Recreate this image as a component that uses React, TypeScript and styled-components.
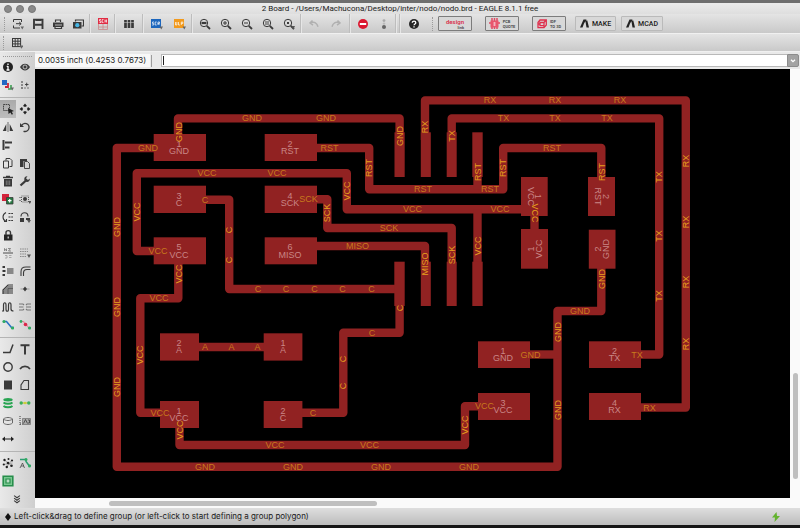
import React from "react";
import styled, { createGlobalStyle } from "styled-components";

const GlobalStyle = createGlobalStyle`
  * { box-sizing: border-box; }
  body { margin: 0; background: #1c1c1c; font-family: Inter, "Liberation Sans", sans-serif; color: #1a1a1a; }
  button, input { font: inherit; color: inherit; }
`;

const ink = "#3a3a3a";

const Desktop = styled.div`
  display: flex;
  flex-direction: column;
  height: 100vh;
  padding: 3px 0;
  background: linear-gradient(#6e6e6e 0 3px, #161616 4px);
`;

const Window = styled.main`
  flex: 1;
  min-height: 0;
  display: flex;
  flex-direction: column;
  background: #e4e4e4;
`;

const TitleBar = styled.header`
  display: grid;
  grid-template-columns: 1fr auto 1fr;
  align-items: center;
  height: 11px;
  padding: 0 4px;
  background: linear-gradient(#ebebeb, #dedede);
`;

const Lights = styled.div`
  display: flex;
  gap: 4px;
`;

const Light = styled.button`
  width: 8px;
  height: 8px;
  padding: 0;
  border: 1px solid #777;
  border-radius: 50%;
  background: #8a8a8a;
`;

const Title = styled.h1`
  margin: 0;
  font-family: Roboto, "Liberation Sans", sans-serif;
  font-size: 8px;
  line-height: 11px;
  font-weight: 400;
  white-space: nowrap;
`;

const Toolbar = styled.div<{ $height: number }>`
  display: flex;
  align-items: center;
  height: ${(p) => p.$height}px;
  background: linear-gradient(#e4e4e4, #c9c9c9);
  border-bottom: 1px solid #f0f0f0;
`;

const Grip = styled.span<{ $width: number }>`
  display: flex;
  justify-content: center;
  width: ${(p) => p.$width}px;
  height: 14px;
  &::before {
    content: "";
    border-left: 1px dotted #9b9b9b;
  }
`;

const ToolButton = styled.button<{ $width: number; $selected?: boolean }>`
  flex: none;
  display: flex;
  align-items: center;
  justify-content: center;
  width: ${(p) => p.$width}px;
  height: 18px;
  padding: 0;
  border: 0;
  background: ${(p) => (p.$selected ? "linear-gradient(#a9a9a9, #bdbdbd)" : "none")};
`;

const Divider = styled.span`
  width: 4px;
  height: 100%;
  background: linear-gradient(90deg, transparent 1px, #bdbdbd 1px 2px, #e6e6e6 2px 3px, transparent 3px);
`;

const LinkButton = styled.button<{ $width: number; $gap: number; $strong?: boolean }>`
  flex: none;
  display: flex;
  align-items: center;
  justify-content: center;
  gap: 3px;
  width: ${(p) => p.$width}px;
  height: 15px;
  margin-right: ${(p) => p.$gap}px;
  padding: 0;
  border: 1px solid ${(p) => (p.$strong ? "#7c7c7c" : "#bababa")};
  border-radius: 1px;
  background: #d8d8d8;
  font-family: Roboto, "Liberation Sans", sans-serif;
  font-size: 7px;
  line-height: 8px;
  font-weight: 500;
`;

const Tiny = styled.span<{ $red?: boolean }>`
  font-size: ${(p) => (p.$red ? 6 : 4)}px;
  line-height: ${(p) => (p.$red ? 7 : 5)}px;
  text-align: left;
  color: ${(p) => (p.$red ? "#d8304c" : "#444")};
  font-weight: 600;
`;

const DesignMark = styled.span`
  display: grid;
  ${Tiny}:last-child { justify-self: end; }
`;

const Body = styled.div`
  flex: 1;
  min-height: 0;
  display: flex;
`;

const Palette = styled.aside`
  flex: none;
  width: 35px;
  background: linear-gradient(90deg, #e9e9e9, #cfcfcf);
`;

const PaletteGrip = styled.div`
  height: 6px;
  padding: 4px 3px 0;
  &::before {
    content: "";
    display: block;
    border-top: 1px dotted #9a9a9a;
  }
`;

const PaletteGrid = styled.div`
  display: grid;
  grid-template-columns: 17px 17px;
`;

const PaletteRule = styled.hr`
  height: 1px;
  margin: 3px 0 2px;
  border: 0;
  background: #b4b4b4;
`;

const MoreButton = styled(ToolButton)`
  height: 18px;
`;

const Workspace = styled.section`
  flex: 1;
  min-width: 0;
  display: flex;
  flex-direction: column;
`;

const CommandRow = styled.div`
  display: flex;
  align-items: center;
  height: 17px;
  background: #e9e9e9;
`;

const Coordinates = styled.output`
  width: 115px;
  height: 13px;
  padding-left: 3px;
  background: #f8f8f8;
  font-size: 8px;
  line-height: 13px;
  white-space: nowrap;
`;

const CommandBox = styled.div`
  flex: 1;
  display: flex;
  align-items: center;
  height: 13px;
  margin-left: 10px;
  padding-left: 1px;
  border: 1px solid #b9b9b9;
  border-right: 0;
  background: #fff;
`;

const SmallWell = styled.span`
  width: 8px;
  height: 12px;
  margin-left: 1px;
  margin-right: -8px;
  border-left: 1px solid #9d9d9d;
`;

const Caret = styled.span`
  width: 1px;
  height: 9px;
  background: #222;
`;

const CommandInput = styled.input`
  flex: 1;
  min-width: 0;
  height: 11px;
  padding: 0;
  border: 0;
  outline: 0;
  background: none;
  font-size: 8px;
`;

const HistoryButton = styled.button`
  display: flex;
  align-items: center;
  justify-content: center;
  width: 12px;
  height: 13px;
  margin-right: 1px;
  padding: 0;
  border: 1px solid #8c8c8c;
  border-radius: 0 2px 2px 0;
  background: #a3a3a3;
`;

const CanvasGrid = styled.div`
  flex: 1;
  min-height: 0;
  display: grid;
  grid-template-columns: 1fr 10px;
  grid-template-rows: minmax(0, 1fr) 10px;
  background: #fafafa;
`;

const Canvas = styled.div`
  min-width: 0;
  min-height: 0;
  background: #000;
  svg {
    display: block;
    width: 100%;
    height: 100%;
  }
`;

const VerticalTrack = styled.div`
  display: grid;
  grid-template-rows: 304fr 106fr 19fr;
  justify-items: center;
`;

const HorizontalTrack = styled.div`
  display: grid;
  grid-template-columns: 74fr 268fr 413fr;
  align-items: center;
`;

const Thumb = styled.span<{ $vertical?: boolean }>`
  ${(p) => (p.$vertical ? "grid-row: 2; width: 5px;" : "grid-column: 2; height: 5px;")}
  border-radius: 3px;
  background: #bfbfbf;
`;

const StatusBar = styled.footer`
  display: flex;
  align-items: center;
  gap: 3px;
  height: 17px;
  padding: 0 20px 0 5px;
  background: linear-gradient(#dedede, #bcbcbc);
  font-size: 8px;
  line-height: 17px;
  white-space: nowrap;
`;

const StatusText = styled.span`
  flex: 1;
`;

const Svg = ({ children, size = 12 }: { children: React.ReactNode; size?: number }) => (
  <svg width={size} height={size} viewBox="0 0 12 12" fill="none" stroke={ink} strokeWidth="1.2" aria-hidden="true">
    {children}
  </svg>
);

const arrow = <path d="M8.5 8.5h3.5l-1.7 3z" fill="#666" stroke="none" />;
const lens = (inner: React.ReactNode) => (
  <>
    <circle cx="5" cy="5" r="3.7" strokeWidth="1" />
    <path d="M7.8 7.8 11 11" strokeWidth="1.8" />
    {inner}
  </>
);

const icons: Record<string, React.ReactNode> = {
  Open: <><path d="M1.5 4V1.5h8V4M1.5 7.500V10h6.500M4 5.700h5M7.200 4l2 1.700-2 1.700" strokeWidth="1" />{arrow}</>,
  Save: <path d="M2 11V1.800h8.500V11M3 6.700h7M4 2h5" strokeWidth="1.900" />,
  Print: <><path d="M1 4.500h10.500V9H1z" fill={ink} stroke="none" /><path d="M3.500 4V2h5v2M3 8.500v2h6.500v-2" /><path d="M3 7h7" stroke="#ddd" strokeWidth=".8" /></>,
  "CAM processor": <><path d="M3.500 3.500V2h8v6h-2" /><path d="M1 4h8.500v6.500H1z" fill={ink} stroke="none" /><circle cx="5.300" cy="7.200" r="2.100" fill="#45b5e4" stroke="none" /></>,
  "Switch to schematic": <><path d="M1 0h10v6H1z" fill="#e02c43" stroke="none" /><path d="M1.500 6v5.500h9V6M6 6v5.500M1.500 9h9" stroke="#c88" strokeWidth=".8" /><path d="M2.500 4.500h1.500V3H2.500V1.500H4M6.500 1.500H5.200v3h1.300M8 1.500v3M9.500 1.500v3M8 3h1.500" stroke="#fff" strokeWidth=".7" /></>,
  "Use library": <path d="M2.500 2v8M6 2v8M9.500 2v8" strokeWidth="2.700" strokeDasharray="2 .6 6" />,
  "Run script": <><path d="M0 1h10v9H0z" fill="#1c66bd" stroke="none" /><path d="M3 4H1.500v1.500h1.200V7H1M5.700 4H4.200v3h1.500M7 7V4h1.500v1.500H7L8.500 7" stroke="#fff" strokeWidth=".7" />{arrow}</>,
  "Run ULP": <><path d="M0 1h10v9H0z" fill="#f29a1d" stroke="none" /><path d="M1.500 4v3h1.400V4M4.500 4v3H6M7.300 7V4h1.500v1.500H7.300" stroke="#fff" strokeWidth=".7" />{arrow}</>,
  "Zoom to fit": lens(<path d="M2.500 5h5" strokeWidth="2.200" />),
  "Zoom in": lens(<path d="M3 5h4M5 3v4" strokeWidth="1" />),
  "Zoom out": lens(<path d="M3 5h4" strokeWidth="1" />),
  Redraw: lens(<path d="M3 4h4M3 6h4" strokeWidth=".9" />),
  "Zoom select": <>{lens(<path d="M4 4h2v2H4z" fill={ink} stroke="none" />)}<path d="M8.500 8h3.500l-1.700 3.500z" fill="#555" stroke="none" /></>,
  Undo: <path d="M4.500 2.500 2 5l3 2.200M2.500 4.800c4-1.300 6.500 0 7.500 4" stroke="#b0b0b0" strokeWidth="1.500" />,
  Redo: <path d="M7.500 2.500 10 5 7 7.200M9.500 4.800C5.500 3.500 3 4.800 2 8.800" stroke="#b0b0b0" strokeWidth="1.500" />,
  Stop: <><circle cx="6" cy="6" r="5" fill="#db1830" stroke="none" /><path d="M2.800 6h6.400" stroke="#fff" strokeWidth="2" /></>,
  Go: <><circle cx="6" cy="2.600" r="1.400" fill="#aaa" stroke="none" /><circle cx="6" cy="5.600" r="1.200" fill="#bbb" stroke="none" /><circle cx="6" cy="9" r="2" fill="#666" stroke="none" /></>,
  Help: <><circle cx="6" cy="6" r="5" fill="#262626" stroke="none" /><path d="M4.300 4.800c0-2.200 3.500-2.200 3.500 0C7.800 6 6 6 6 7.300M6 8.300v1.200" stroke="#fff" strokeWidth="1.300" /></>,
  Grid: <><path d="M1 1.500h9M1 4.200h9M1 6.900h9M1 9.600h9M1.500 1v9M4.200 1v9M6.900 1v9M9.600 1v9" strokeWidth="1" /><path d="M8.500 8.500h4l-2 3.300z" fill="#666" stroke="none" /></>,
  Info: <><circle cx="6" cy="6" r="5" fill="#222" stroke="none" /><path d="M6 2.500v1.500M6 5v4M4.700 5.300H6M4.500 9h3" stroke="#fff" strokeWidth="1.300" /></>,
  Show: <><path d="M1 6c2.500-4.500 7.500-4.500 10 0-2.500 4.500-7.500 4.500-10 0z" fill={ink} stroke="none" /><circle cx="6" cy="6" r="2" stroke="#ddd" strokeWidth=".8" /></>,
  Display: <><path d="M0 1h5v5H0z" fill="#2469c4" stroke="none" /><path d="M6 4v4H3" stroke="#c9283c" strokeWidth="1.800" /><path d="M9 6v4H6" stroke="#3da052" strokeWidth="1.600" />{arrow}</>,
  Mark: <><path d="M3 2v8.500" strokeDasharray="2 1" strokeWidth="1" /><path d="M2 9h8" strokeDasharray="2 1" strokeWidth="1" stroke="#777" /><path d="M6 5.500h3.500M7.700 3.700v3.600" strokeWidth=".9" /></>,
  Group: <><path d="M1.500 1.500h6v6h-6z" strokeWidth=".9" strokeDasharray="1.500 .6" /><path d="m6 5 6 3-2.300.7L11 11l-1.200.7-1.400-2.300L6.500 11z" fill="#222" stroke="none" /></>,
  Move: <path d="m6 .5 2 2.500L6 4 4 3zM6 11.500 4 9l2-1 2 1zM.5 6 3 4l1 2-1 2zM11.500 6 9 8 8 6l1-2z" fill="#222" stroke="none" />,
  Mirror: <><path d="M4.300 3v7H.8zM7.700 3v7h3.500z" fill={ink} stroke="none" /><path d="M6 1v10" strokeWidth=".7" /></>,
  Rotate: <><path d="M2.500 4.500C5 .5 10.500 2.500 10 7c-.4 3-3 4-5.500 3.300" strokeWidth="1.300" /><path d="M1 2v4h4z" fill={ink} stroke="none" /></>,
  Align: <path d="M1.500 1v10M3 3.500h7M3 8.500h4.500" strokeWidth="2" />,
  Copy: <path d="M1.500 4h5v7h-5zM4 3.500V1.500h4l2 2v6H7.500" strokeWidth="1" />,
  Paste: <><path d="M1 2h7v2H4.500v6H1z" fill={ink} stroke="none" /><path d="M5.500 4.500h3l2 2v5h-5z" strokeWidth=".9" /></>,
  Delete: <><path d="M1 2.500h10M4 1.500h4" strokeWidth="1.500" /><path d="M2 4h8v7.500H2z" fill={ink} stroke="none" /><path d="M4.300 5.500v4.500M6 5.500v4.500M7.700 5.500v4.500" stroke="#aaa" strokeWidth=".6" /></>,
  Change: <><path d="m1.500 10.500 5.500-5" strokeWidth="2.300" /><path d="M10.800 3.500 9 5 7 3.200 8.500 1.200C5.500.7 4.500 4 6 6c2 2 5.300.5 4.800-2.500z" fill={ink} stroke="none" /></>,
  "Add part": <><path d="M0 1h7v7H0z" fill="#d3233a" stroke="none" /><path d="M4.500 4.500h6.500V11H4.500z" fill="#277a42" stroke={ink} strokeWidth=".8" /><path d="M7.700 6v3.500M6 7.700h3.500" stroke="#fff" /></>,
  Replace: <><path d="M2.500 3h7v6h-7z" strokeDasharray="1 1" strokeWidth=".8" /><circle cx="6" cy="6" r="2" fill={ink} stroke="none" /><path d="M0 4.500h2M0 7.500h2" stroke="#777" strokeWidth=".8" /><path d="M9 8h3.500l-1.700 3z" fill="#555" stroke="none" /></>,
  Pinswap: <><path d="M4 1.500C0 3.500 0 8.500 4 10.500M2 10.500h2.500V8" strokeWidth="1.100" /><path d="M6.500 2.500H11M6.500 6H11M6.500 9.500H11" strokeDasharray="2 .7" /></>,
  "Replace package": <><path d="M1 7h4v4H1zM7 7h4v2H7z" fill={ink} stroke="none" /><path d="M2 5.500c0-5 7-5 7 0" /><path d="M8 9h4l-2 3z" fill="#555" stroke="none" /></>,
  Lock: <><path d="M2 5.500h8.500v6H2z" fill="#262626" stroke="none" /><path d="M4 6V3.500c0-2.500 4.500-2.500 4.500 0V6" strokeWidth="1.400" /><path d="M6.200 7.500v2" stroke="#ddd" /></>,
  Name: <><path d="M2.500 4V1.500L4.500 4V1.500M6 1.500h2.500L6.500 4h2.500" strokeWidth=".7" stroke="#666" /><path d="M1 6h10" strokeWidth=".9" /><path d="M3 8.500h2v2.500H3M7 8.500h2.500M7 10.500h2.500" strokeWidth=".8" stroke="#999" /></>,
  Value: <><path d="M1 2h8M1 4.500h8M1 7h6M1 9.500h6" strokeWidth="1.200" strokeDasharray="1.500 .8" stroke="#888" /><path d="M8 7.500h4l-2 3.500z" fill="#555" stroke="none" /></>,
  Smash: <><path d="M5 3h6.500v6H5z" fill="#888" stroke="none" /><path d="M.5 2h2.500M.5 6h3M.5 10h2.500" strokeWidth="1.800" /></>,
  Miter: <path d="M2 11V7C2 3.500 3.500 2 7 2h4.500M4.500 11V8c0-2.500 1-3.500 3.500-3.500h3.500" strokeWidth="1.100" />,
  Split: <><path d="M1 11V8l5-5h5v8z" fill="#888" stroke="none" /><path d="M1 11V7l5-5h5" strokeWidth="1.200" /><path d="M6 11V5.500h5" stroke="#555" strokeWidth=".8" /></>,
  Optimize: <><path d="M1.500 6h9" stroke="#aaa" strokeWidth="1.300" /><path d="M6 3.500 8 6 6 8.500 4 6z" fill={ink} stroke="none" /></>,
  Meander: <path d="M0 10h1.500V4c0-3 2.500-3 2.500 0v4c0 3 2.500 3 2.500 0V4C6.500 1 9 1 9 4v4c0 2 1 2 2.500 2" strokeWidth="1.200" />,
  Ripup: <path d="M0 3h4l1 1M7 4l1-1h4M0 6h4.500M7 6H12M0 9h4l1-1M7 8l1 1h4" strokeWidth="1.100" stroke="#777" />,
  Route: <><path d="M1 2.500h3.500l5 6H12" stroke="#2a72c4" strokeWidth="1.600" /><circle cx="2" cy="2.500" r="1.600" fill="#2fab62" stroke="none" /><circle cx="10.500" cy="9" r="1.600" fill="#2fab62" stroke="none" /></>,
  Unroute: <><path d="M1 2.500h3.500l5 6H12" stroke="#e08c9c" strokeWidth="1.200" /><circle cx="2" cy="2.500" r="1.400" fill="#2fab62" stroke="none" /><circle cx="6.500" cy="5.500" r="1.800" fill="#db2548" stroke="none" /><circle cx="10.500" cy="9" r="1.600" fill="#2fab62" stroke="none" /></>,
  Line: <path d="M1 9.500h7l3-8" strokeWidth="1.500" />,
  Text: <path d="M1.500 2.200h9M6 2v9.500" strokeWidth="2" />,
  Circle: <circle cx="6" cy="6" r="4.200" strokeWidth="1.400" />,
  Arc: <path d="M1 8c2.500-3.500 7.500-3.500 10 0" strokeWidth="1.700" />,
  Rectangle: <path d="M2 1.500h8v9H2z" fill={ink} stroke="none" />,
  Polygon: <path d="M2 10.500V6l3-4.500h4.500v9z" strokeWidth="1.100" />,
  Via: <><ellipse cx="6" cy="2.700" rx="4.700" ry="1.700" fill="#28a452" stroke="none" /><path d="M1.500 5.500c2 1.700 7 1.700 9 0M1.500 9c2 1.700 7 1.700 9 0" stroke="#28a452" strokeWidth="1.900" /></>,
  Signal: <><path d="M2 6h8" stroke="#c9c642" strokeWidth="1.200" /><circle cx="2.200" cy="6" r="1.700" fill="#3aaf5b" stroke="none" /><circle cx="6" cy="6" r="1.300" fill="#cbcf3a" stroke="none" /><circle cx="9.800" cy="6" r="1.700" fill="#3aaf5b" stroke="none" /></>,
  Hole: <path d="M1.500 4c2-2 7-2 9 0-2 2-7 2-9 0zv4c2 2 7 2 9 0V4" strokeWidth="1" stroke="#666" />,
  Attribute: <><path d="M1 1v10M1 9h3" strokeDasharray="1 1" strokeWidth="1" /><path d="M3.500 3.500h8v6h-8z" fill="#aaa" stroke="#777" strokeWidth=".8" /><path d="m4.500 8.500 2-4 2 4M9 5h1.500v3H9" strokeWidth=".8" /></>,
  Dimension: <path d="M0 6 3 3.500v2h6v-2L12 6 9 8.500v-2H3v2z" fill="#222" stroke="none" />,
  Ratsnest: <><path d="m2.500 3 7 6M9.500 3.500 5 9.500M1.500 7.500 10.500 6" strokeWidth=".6" stroke="#777" /><g fill="#222" stroke="none"><circle cx="2.500" cy="3" r="1.200" /><circle cx="6.500" cy="2" r="1" /><circle cx="10" cy="3.500" r="1.100" /><circle cx="6" cy="6" r="1.300" /><circle cx="1.800" cy="7.500" r="1.100" /><circle cx="4.800" cy="10" r="1.200" /><circle cx="9.500" cy="8.800" r="1.300" /></g></>,
  Autorouter: <><path d="M1 2.500h6v2l3 4h2" stroke="#2c9c71" strokeWidth="1.500" /><path d="M2 9h3M1 11l2.500-5 2 5" strokeWidth=".7" /><circle cx="7" cy="2.500" r="1.500" fill="#2fab62" stroke="none" /><circle cx="10.500" cy="9" r="1.500" fill="#2fab62" stroke="none" /></>,
  DRC: <><path d="M1.200 1.200h9.600v9.600H1.200z" fill="#79c891" stroke="#278e4b" strokeWidth="1.600" /><path d="M4 4h4v4H4z" fill="#b8dec3" stroke="#278e4b" /></>,
  More: <path d="m2.500 2 3.500 2.500L9.500 2M2.500 5 6 7.500 9.500 5M2.500 8 6 10.500 9.500 8" strokeWidth="1.300" />,
};

const Tool = ({ name, width = 21, selected }: { name: string; width?: number; selected?: boolean }) => (
  <ToolButton type="button" aria-label={name} $width={width} $selected={selected}>
    <Svg>{icons[name]}</Svg>
  </ToolButton>
);

const paletteGroups: string[][] = [
  ["Info", "Show", "Display", "Mark"],
  ["Group", "Move", "Mirror", "Rotate", "Align", "", "Copy", "Paste", "Delete", "Change", "Add part", "Replace",
    "Pinswap", "Replace package", "Lock", "", "Name", "Value", "Smash", "Miter", "Split", "Optimize", "Meander", "Ripup", "Route", "Unroute"],
  ["Line", "Text", "Circle", "Arc", "Rectangle", "Polygon", "Via", "Signal", "Hole", "Attribute", "Dimension", ""],
  ["Ratsnest", "Autorouter", "DRC", ""],
];

const Autodesk = () => (
  <svg width="9" height="9" viewBox="0 0 9 9" aria-hidden="true">
    <path d="M0 8.500 3.500.5h3L4 4.500 2.500 8.500zM5.300 1.500l2 0L9 8.500H6.500z" fill="#222" />
  </svg>
);

const traces = [
  "M178 147V118.400H399.600V140",
  "M425 140V100.400H685.800V407.500H641",
  "M451.700 140V118.400H659.200V354.500H641",
  "M317 148H369.200V189.200H503.200V148H601.300V180",
  "M477.500 170V189.200",
  "M154 251H136.800V173.200H346.800V209.200H521",
  "M477.500 209.200V270",
  "M534.500 214V232",
  "M601.300 266V311H557.500V466.800H116.800V148H154",
  "M530 354.500H557.500",
  "M206 199.800H229.200V289H399.600",
  "M399.600 300V332.800H343.300V412.700H302",
  "M317 199.200H327.300V228H451.700V270",
  "M317 246H425V270",
  "M178.300 264V298.200H140.300V412.700H160",
  "M179.500 426V445H465V406.200H478",
  "M199 347H264",
];

const pads: [number, number, number, number][] = [
  [153.700, 134, 52.300, 27], [153.700, 185.700, 52.300, 27.300], [153.700, 237.300, 52.300, 27],
  [264.700, 134, 52.300, 27], [264.700, 185.700, 52.300, 27.300], [264.700, 237.300, 52.300, 27],
  [160, 333.300, 39, 27.300], [263.700, 333.300, 38.700, 27.300], [160, 401, 39, 27], [263.700, 401, 38.700, 27],
  [478, 341.300, 52, 26.700], [478, 393, 52, 27], [589, 341.300, 52, 26.700], [589, 393, 52, 27],
  [521, 177, 26.700, 39], [521, 229, 27, 39.700], [588, 177, 27, 39], [588.800, 229.700, 26.700, 39],
  [394.500, 132.300, 10.200, 44.700], [420.800, 132.300, 10, 44.700], [446.700, 132.300, 10, 44.700], [472.300, 132.300, 10.400, 44.700],
  [394.300, 261.700, 10.400, 44.300], [420.800, 261.700, 10, 44.300], [446.700, 261.700, 10, 44.300], [472.300, 261.700, 10.400, 44.300],
];

type Label = [string, number, number, number?];

const netLabels: Label[] = [
  ["GND", 252, 118], ["GND", 326, 118], ["GND", 178.500, 132, -90], ["GND", 148, 148],
  ["GND", 400, 136, -90], ["GND", 117, 227, -90], ["GND", 117, 307, -90], ["GND", 117, 387, -90],
  ["GND", 205, 467], ["GND", 293, 467], ["GND", 381, 467], ["GND", 469, 467],
  ["GND", 530.500, 354.500], ["GND", 558, 332, -90], ["GND", 558, 410, -90], ["GND", 580, 311], ["GND", 601.500, 279, -90],
  ["RX", 490, 100], ["RX", 555, 100], ["RX", 620, 100], ["RX", 425, 127, -90],
  ["RX", 686, 161, -90], ["RX", 686, 222, -90], ["RX", 686, 282, -90], ["RX", 686, 344, -90], ["RX", 649.500, 407.500],
  ["TX", 503.500, 118], ["TX", 555, 118], ["TX", 607, 118], ["TX", 452, 136, -90],
  ["TX", 659, 177, -90], ["TX", 659, 236, -90], ["TX", 659, 296, -90], ["TX", 637, 354.500],
  ["RST", 329.500, 148], ["RST", 369, 168, -90], ["RST", 423, 189], ["RST", 490, 189], ["RST", 477.500, 172, -90],
  ["RST", 503, 168, -90], ["RST", 552, 148], ["RST", 601.500, 172, -90],
  ["VCC", 207, 173], ["VCC", 277, 173], ["VCC", 137, 212, -90], ["VCC", 158, 251.300], ["VCC", 347, 191, -90],
  ["VCC", 412.500, 209], ["VCC", 500, 209], ["VCC", 477.500, 246, -90], ["VCC", 534.500, 213, 90],
  ["VCC", 178.500, 274, -90], ["VCC", 159, 298], ["VCC", 140, 355, -90], ["VCC", 160, 413], ["VCC", 179.500, 430, -90],
  ["VCC", 275, 445], ["VCC", 369.500, 445], ["VCC", 465, 425, -90], ["VCC", 484.500, 406],
  ["SCK", 308.500, 199], ["SCK", 327, 213, -90], ["SCK", 389, 228], ["SCK", 451.500, 255, -90],
  ["MISO", 357.500, 246], ["MISO", 425, 264, -90],
  ["C", 205, 200], ["C", 229, 230, -90], ["C", 229, 260, -90], ["C", 258, 289], ["C", 286, 289], ["C", 314.500, 289],
  ["C", 342.500, 289], ["C", 371.500, 289], ["C", 399.500, 308, -90], ["C", 372, 333], ["C", 343, 359, -90], ["C", 343, 386, -90], ["C", 313, 413],
  ["A", 205, 347], ["A", 231.500, 347], ["A", 257.500, 347],
];

const padLabels: Label[] = [
  ["1", 179, 144], ["GND", 179, 151], ["2", 290, 144], ["RST", 290, 151],
  ["3", 179, 195.500], ["C", 179, 202.500], ["4", 290, 195.500], ["SCK", 290, 202.500],
  ["5", 179, 247], ["VCC", 179, 254.500], ["6", 290, 247], ["MISO", 290, 254.500],
  ["2", 179, 343], ["A", 179, 350], ["1", 283, 343], ["A", 283, 350],
  ["1", 179, 410.500], ["VCC", 179, 418], ["2", 283, 410.500], ["C", 283, 418],
  ["1", 503, 351], ["GND", 503, 358], ["3", 503, 402.500], ["VCC", 503, 410],
  ["2", 614.500, 350.500], ["TX", 614.500, 358], ["4", 614.500, 402.500], ["RX", 614.500, 410],
  ["1", 538, 196.500, 90], ["VCC", 531, 196.500, 90], ["1", 531, 249, -90], ["VCC", 538.500, 249, -90],
  ["2", 605.500, 196.500, 90], ["RST", 598, 196.500, 90], ["2", 598, 249, -90], ["GND", 605.500, 249, -90],
];

const BoardText = styled.text<{ $pad?: boolean; $turned?: boolean }>`
  font-family: "Liberation Sans", Arial, sans-serif;
  font-size: 9px;
  text-anchor: middle;
  fill: ${(p) => (p.$pad ? "#c98686" : p.$turned ? "#e6a01c" : "#c87a1c")};
`;

const BoardLabel = ({ label, pad }: { label: Label; pad?: boolean }) => {
  const [text, x, y, turn = 0] = label;
  return (
    <BoardText $pad={pad} $turned={turn !== 0} dy="3" transform={`translate(${x} ${y}) rotate(${turn})`}>
      {text}
    </BoardText>
  );
};

const Board = () => (
  <svg viewBox="35 69 755 429" preserveAspectRatio="xMinYMin meet" role="img" aria-label="Board layout">
    <g fill="none" stroke="#912222" strokeWidth="8.400" strokeLinejoin="round">
      {traces.map((d) => <path key={d} d={d} />)}
    </g>
    <g fill="#912222">
      {pads.map(([x, y, w, h]) => <rect key={`${x}-${y}`} x={x} y={y} width={w} height={h} />)}
    </g>
    {padLabels.map((l, i) => <BoardLabel key={i} label={l} pad />)}
    {netLabels.map((l, i) => <BoardLabel key={i} label={l} />)}
  </svg>
);

export default function App() {
  return (
    <Desktop>
      <GlobalStyle />
      <Window>
        <TitleBar>
          <Lights>
            <Light type="button" aria-label="Close" />
            <Light type="button" aria-label="Minimize" />
            <Light type="button" aria-label="Full screen" />
          </Lights>
          <Title>2 Board - /Users/Machucona/Desktop/inter/nodo/nodo.brd - EAGLE 8.1.1 free</Title>
        </TitleBar>
        <Toolbar $height={20} role="toolbar" aria-label="Actions">
          <Grip $width={8} />
          <Tool name="Open" width={20} />
          <Tool name="Save" width={20} />
          <Tool name="Print" width={20} />
          <Tool name="CAM processor" width={20} />
          <Divider />
          <Tool name="Switch to schematic" />
          <Divider />
          <Tool name="Use library" width={24} />
          <Divider />
          <Tool name="Run script" width={24} />
          <Tool name="Run ULP" />
          <Divider />
          <Tool name="Zoom to fit" />
          <Tool name="Zoom in" />
          <Tool name="Zoom out" />
          <Tool name="Redraw" />
          <Tool name="Zoom select" />
          <Divider />
          <Tool name="Undo" />
          <Tool name="Redo" width={24} />
          <Divider />
          <Tool name="Stop" />
          <Tool name="Go" />
          <Divider />
          <Divider />
          <Tool name="Help" width={24} />
          <Grip $width={12} />
          <LinkButton type="button" $width={34} $gap={13} $strong>
            <DesignMark><Tiny $red>design</Tiny><Tiny>link</Tiny></DesignMark>
          </LinkButton>
          <LinkButton type="button" $width={34} $gap={13} $strong>
            <svg width="11" height="11" viewBox="0 0 11 11" aria-hidden="true">
              <path d="M3 0v3M5.500 0v3M8 0v3M0 5h11M3 9v2M5.500 9v2M8 9v2" stroke="#e04862" strokeWidth="1.500" />
              <path d="M1.500 2.500h8v7h-8z" fill="#e8556d" />
              <path d="M5.500 4v4M4 5h3M4 7h3" stroke="#f8ccd3" strokeWidth=".7" />
            </svg>
            <Tiny>PCB<br />QUOTE</Tiny>
          </LinkButton>
          <LinkButton type="button" $width={34} $gap={9} $strong>
            <svg width="10" height="10" viewBox="0 0 10 10" fill="none" stroke="#df2f4c" strokeWidth="1.300" aria-hidden="true">
              <path d="M1 3.500 3 1h6.300v5L7 8.700H1zM3 3.500h4v3.200H3zM1 5h2M7 3.500 9 1M7 6.500V9" />
            </svg>
            <Tiny>IDF<br />TO 3D</Tiny>
          </LinkButton>
          <LinkButton type="button" $width={41} $gap={5}><Autodesk />MAKE</LinkButton>
          <LinkButton type="button" $width={42} $gap={0}><Autodesk />MCAD</LinkButton>
        </Toolbar>
        <Toolbar $height={18} role="toolbar" aria-label="Parameters">
          <Grip $width={6} />
          <Tool name="Grid" />
        </Toolbar>
        <Body>
          <Palette>
            <PaletteGrip />
            {paletteGroups.map((group, g) => (
              <React.Fragment key={g}>
                {g > 0 && <PaletteRule />}
                <PaletteGrid>
                  {group.map((name, i) =>
                    name ? <Tool key={name} name={name} width={16} selected={name === "Group"} /> : <span key={i} />
                  )}
                </PaletteGrid>
              </React.Fragment>
            ))}
            <MoreButton type="button" aria-label="More" $width={34}><Svg size={10}>{icons.More}</Svg></MoreButton>
          </Palette>
          <Workspace>
            <CommandRow>
              <Coordinates>0.0035 inch (0.4253 0.7673)</Coordinates>
              <SmallWell />
              <CommandBox>
                <Caret />
                <CommandInput aria-label="Command" />
              </CommandBox>
              <HistoryButton type="button" aria-label="Command history">
                <svg width="6" height="4" viewBox="0 0 6 4" fill="none" stroke="#fff" strokeWidth="1.300"><path d="m1 .7 2 2 2-2" /></svg>
              </HistoryButton>
            </CommandRow>
            <CanvasGrid>
              <Canvas><Board /></Canvas>
              <VerticalTrack><Thumb $vertical /></VerticalTrack>
              <HorizontalTrack><Thumb /></HorizontalTrack>
            </CanvasGrid>
          </Workspace>
        </Body>
        <StatusBar>
          <svg width="6" height="8" viewBox="0 0 6 8" aria-hidden="true"><path d="m3 0 3 4-3 4-3-4z" fill="#111" /></svg>
          <StatusText>Left-click&amp;drag to define group (or left-click to start defining a group polygon)</StatusText>
          <svg width="8" height="10" viewBox="0 0 8 10" aria-hidden="true"><path d="M4.500 0 0 5.500h3L2.500 10 8 4H5z" fill="#63b32e" /></svg>
        </StatusBar>
      </Window>
    </Desktop>
  );
}
